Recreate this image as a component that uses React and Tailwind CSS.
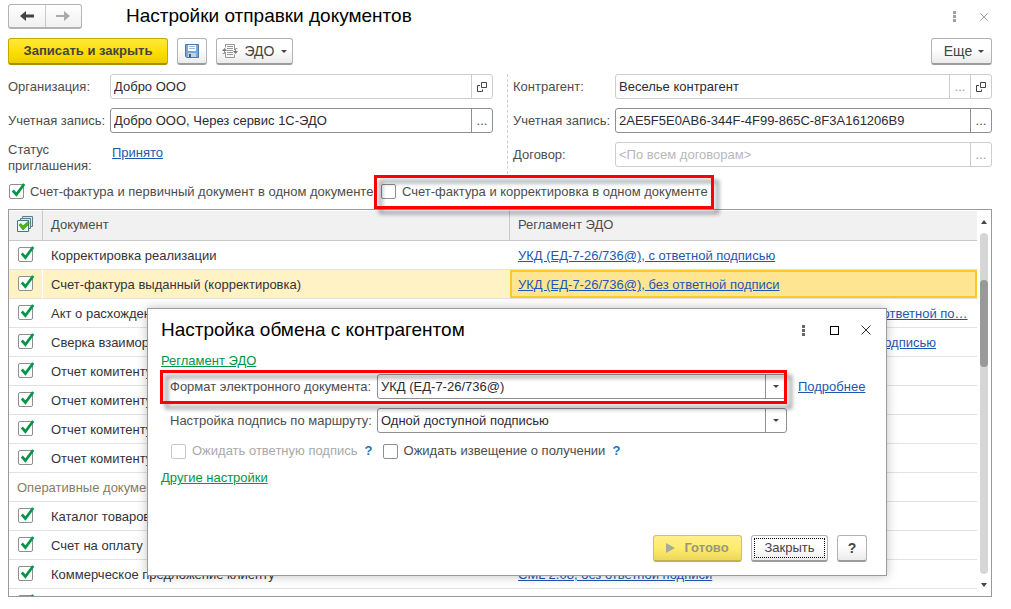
import { useState } from 'react';

const documents = [
  { id: 1, name: 'Корректировка реализации', rule: 'УКД (ЕД-7-26/736@), с ответной подписью' },
  { id: 2, name: 'Счет-фактура выданный (корректировка)', rule: 'УКД (ЕД-7-26/736@), без ответной подписи' },
  { id: 3, name: 'Акт о расхождениях', rule: 'Акт о расхождениях (ЕД-7-26/423@), по приемке товаров, с ответной по…' },
  { id: 4, name: 'Сверка взаиморасчетов', rule: 'Акт сверки взаимных расчетов (ЕД-7-26/405@), с ответной подписью' },
  { id: 5, name: 'Отчет комитенту', rule: '' },
  { id: 6, name: 'Отчет комитенту', rule: '' },
  { id: 7, name: 'Отчет комитенту', rule: '' },
  { id: 8, name: 'Отчет комитенту', rule: '' },
  { id: 9, name: 'Оперативные документы', group: true },
  { id: 10, name: 'Каталог товаров', rule: '' },
  { id: 11, name: 'Счет на оплату покупателю', rule: '' },
  { id: 12, name: 'Коммерческое предложение клиенту', rule: 'CML 2.08, без ответной подписи' },
  { id: 13, name: '', rule: '' },
];

const Checkbox = ({ id, label, disabled, defaultChecked }) => (
  <span className="relative block size-[15px] shrink-0">
    <input
      id={id}
      type="checkbox"
      aria-label={label}
      disabled={disabled}
      defaultChecked={defaultChecked}
      className="peer block size-[15px] appearance-none rounded-[2px] border border-[#8f8f8f] bg-white disabled:border-[#c8c8c8]"
    />
    <svg
      viewBox="0 0 17 17"
      className="pointer-events-none absolute -top-px left-0 hidden size-[17px] peer-checked:block"
    >
      <path d="m3.800 7.500 3.600 4L15.200 1" fill="none" stroke="#009646" strokeWidth="2.700" />
    </svg>
  </span>
);

const OpenIcon = () => (
  <svg viewBox="0 0 10 10" className="size-[10px]" fill="none" stroke="#444">
    <path d="M4.500.5h5v5h-5zM3 3.500H.5v6h5V7.500" />
  </svg>
);

const Arrow = () => (
  <svg viewBox="0 0 6 3" className="h-[3px] w-[6px]">
    <path d="M0 0h6L3 3Z" fill="#444" />
  </svg>
);

const Dots = ({ color }) => (
  <svg viewBox="0 0 3 11" className="h-[11px] w-[3px]" fill={color}>
    <path d="M0 0h3v3H0zM0 4h3v3H0zM0 8h3v3H0z" />
  </svg>
);

const Cross = ({ className }) => (
  <svg viewBox="0 0 10 10" className={className} stroke="currentColor" fill="none">
    <path d="m.5.5 9 9m0-9-9 9" />
  </svg>
);

const Button = ({ className, children, ...props }) => (
  <button
    type="button"
    className={`flex h-[27px] shrink-0 items-center justify-center rounded-[3px] border border-b-2 ${className}`}
    {...props}
  >
    {children}
  </button>
);

const grey = 'border-[#b3b3b3] border-b-[#9c9c9c] bg-linear-to-b from-white from-40% to-[#ebebeb] text-[#444]';

const Field = ({ id, label, value, placeholder, dim, buttons }) => {
  const line = dim ? 'border-[#cdcdcd]' : 'border-[#8f8f8f]';
  return (
    <div className="flex h-[25px] items-center">
      <label htmlFor={id} className="w-[102px] shrink-0 whitespace-nowrap">{label}</label>
      <div className={`flex h-full min-w-0 flex-1 rounded-[3px] border bg-white ${line}`}>
        <input
          id={id}
          type="text"
          defaultValue={value}
          placeholder={placeholder}
          className="min-w-0 flex-1 px-[3px] text-[#2b2b33] outline-none placeholder:text-[#b8b8b8]"
        />
        {buttons.map((kind) => (
          <button
            key={kind}
            type="button"
            aria-label={kind === 'open' ? 'Открыть' : 'Выбрать'}
            className={`flex w-[21px] items-center justify-center border-l ${line}`}
          >
            {kind === 'open' ? <OpenIcon /> : <span className={dim ? 'text-[#999]' : ''}>...</span>}
          </button>
        ))}
      </div>
    </div>
  );
};

const Select = ({ id, label, options }) => (
  <div className="flex h-[25px] items-center">
    <label htmlFor={id} className="w-[207px] shrink-0 whitespace-nowrap">{label}</label>
    <div className="flex h-full min-w-0 flex-1 rounded-[3px] border border-[#8f8f8f] bg-white">
      <select id={id} className="min-w-0 flex-1 appearance-none px-[3px] text-[#2b2b33] outline-none">
        {options.map((option) => (
          <option key={option}>{option}</option>
        ))}
      </select>
      <span className="flex w-[21px] items-center justify-center border-l border-[#8f8f8f]">
        <Arrow />
      </span>
    </div>
  </div>
);

const Highlight = ({ className }) => (
  <div
    className={`pointer-events-none absolute z-10 border-3 border-[#f00] drop-shadow-[5px_5px_2px_rgba(0,0,0,0.4)] ${className}`}
  />
);

const ExchangeDialog = () => (
  <section
    role="dialog"
    aria-label="Настройка обмена с контрагентом"
    className="absolute top-[308px] right-[124px] left-[147px] z-20 flex min-h-[268px] flex-col border border-[#9a9a9a] bg-white pr-[19px] pb-[13px] pl-[13px] shadow-[0_0_10px_rgba(0,0,0,0.25)]"
  >
    <div className="flex h-[42px] items-center">
      <h2 className="flex-1 text-[19px] text-black">Настройка обмена с контрагентом</h2>
      <div className="-mr-[14px] flex items-center">
        <button type="button" aria-label="Меню" className="flex w-[31px] justify-center"><Dots color="#666" /></button>
        <button type="button" aria-label="Развернуть" className="flex w-[31px] justify-center">
          <span className="size-[9px] border border-black" />
        </button>
        <button type="button" aria-label="Закрыть окно" className="flex w-[31px] justify-center text-[#333]">
          <Cross className="size-[10px]" />
        </button>
      </div>
    </div>
    <a href="#rule" className="mt-[2px] self-start leading-[16px] text-[#009646] underline">Регламент ЭДО</a>
    <div className="mt-[5px] flex gap-[11px] pl-[9px]">
      <div className="relative flex min-w-0 flex-1 flex-col gap-[9px]">
        <Select id="format" label="Формат электронного документа:" options={['УКД (ЕД-7-26/736@)']} />
        <Select id="route" label="Настройка подпись по маршруту:" options={['Одной доступной подписью']} />
        <Highlight className="-top-[4px] right-0 -left-[10px] h-[34px]" />
      </div>
      <a href="#more" className="w-[69px] shrink-0 leading-[25px] text-[#1f56b4] underline">Подробнее</a>
    </div>
    <div className="mt-[10px] flex items-center pl-[10px] leading-[16px]">
      <Checkbox id="wait-sign" disabled />
      <label htmlFor="wait-sign" className="ml-[6px] text-[#a9a9a9]">Ожидать ответную подпись</label>
      <button type="button" className="ml-[6px] w-[10px] font-bold text-[#1a75bb]">?</button>
      <span className="w-[9px]" />
      <Checkbox id="wait-notice" />
      <label htmlFor="wait-notice" className="ml-[6px]">Ожидать извещение о получении</label>
      <button type="button" className="ml-[6px] w-[10px] font-bold text-[#1a75bb]">?</button>
    </div>
    <a href="#other" className="mt-[11px] self-start leading-[16px] text-[#009646] underline">Другие настройки</a>
    <div className="mt-auto flex justify-end gap-[9px]">
      <Button
        disabled
        className="w-[89px] gap-[9px] border-[#d6c34a] border-b-[#c4b34a] bg-linear-to-b from-[#fff08a] via-[#ffec6b] to-[#ecd75e] font-bold text-[#969682]"
      >
        <svg viewBox="0 0 9 10" className="h-[10px] w-[9px]">
          <path d="M0 0v10l9-5Z" fill="#a3ad98" />
        </svg>
        Готово
      </Button>
      <Button className={`w-[77px] p-[2px] ${grey}`}>
        <span className="flex h-full w-full items-center justify-center border border-dotted border-black">Закрыть</span>
      </Button>
      <Button aria-label="Справка" className={`w-[30px] text-[14px] font-bold ${grey}`}>?</Button>
    </div>
  </section>
);

const DocumentsTable = () => {
  const [selected, setSelected] = useState(2);

  return (
    <div className="flex h-[388px] overflow-hidden border border-[#9a9a9a]">
      <div className="min-w-0 flex-1 overflow-hidden">
        <table className="w-full table-fixed border-separate border-spacing-0 text-left">
          <colgroup>
            <col className="w-[34px]" />
            <col className="w-1/2" />
            <col className="w-1/2" />
          </colgroup>
          <thead>
            <tr className="h-[31px] bg-[#f1f1f1]">
              <th className="border-t border-r border-b border-t-white border-r-[#c9c9c9] border-b-[#c9c9c9] pb-[3px] pl-[8px]">
                <svg viewBox="0 0 16 16" className="size-[16px]">
                  <path d="M5.500.5h10v10h-10z" fill="#dbe6e8" stroke="#5c7c88" />
                  <path d="M3.500 2.500h10v10h-10z" fill="#dbe6e8" stroke="#5c7c88" />
                  <path d="M.5 4.500h11v11H.5z" fill="#f2f7f8" stroke="#4f7280" />
                  <path d="m2 9 2-1.500 2 2.500 5.500-5L12 8l-6 6Z" fill="#54b415" stroke="#2f8a0c" strokeWidth=".6" />
                </svg>
              </th>
              <th className="border-t border-r border-b border-t-white border-r-[#c9c9c9] border-b-[#c9c9c9] pb-[2px] pl-[8px] font-normal">
                Документ
              </th>
              <th className="border-t border-b border-t-white border-b-[#c9c9c9] pb-[2px] pl-[8px] font-normal">
                Регламент ЭДО
              </th>
            </tr>
          </thead>
          <tbody>
            {documents.map((doc) => {
              if (doc.group) {
                return (
                  <tr key={doc.id} className="h-[29px]">
                    <td colSpan={3} className="border-b border-[#e2e2e2] pt-[2px] pl-[8px] text-[#857d5f]">{doc.name}</td>
                  </tr>
                );
              }
              const active = doc.id === selected;
              return (
                <tr
                  key={doc.id}
                  onClick={() => setSelected(doc.id)}
                  className={`h-[29px] ${active ? 'bg-[#fff2c4]' : ''}`}
                >
                  <td className="border-r border-b border-r-white border-b-[#e2e2e2] pb-[2px] pl-[9px]">
                    <Checkbox label={doc.name} defaultChecked />
                  </td>
                  <td className="truncate border-b border-[#e2e2e2] pt-[2px] pl-[8px] text-[#33333b]">{doc.name}</td>
                  <td className="border-b border-[#e2e2e2] p-0">
                    <div
                      className={`h-[28px] truncate border-2 pt-[5px] pr-[4px] pl-[6px] leading-[16px] ${
                        active ? 'border-[#fbc926] bg-[#fee591]' : 'border-transparent'
                      }`}
                    >
                      <a href="#rule" className="text-[#1f56b4] underline">{doc.rule}</a>
                    </div>
                  </td>
                </tr>
              );
            })}
          </tbody>
        </table>
      </div>
      <div className="flex w-[14px] shrink-0 flex-col items-center pt-[10px] pb-[9px]">
        <svg viewBox="0 0 6 4" className="h-[4px] w-[6px]"><path d="M0 4h6L3 0Z" fill="#444" /></svg>
        <div className="my-[9px] w-[8px] flex-1 rounded-full bg-[#d6d6d6] pt-[47px]">
          <div className="h-[87px] rounded-full bg-[#999]" />
        </div>
        <svg viewBox="0 0 6 4" className="h-[4px] w-[6px]"><path d="M0 0h6L3 4Z" fill="#444" /></svg>
      </div>
    </div>
  );
};

const App = () => (
  <main className="relative bg-white pt-[4px] pr-[19px] pb-[12px] pl-[8px] font-['Liberation_Sans',Arial,sans-serif] text-[13px] text-[#4d4d4d]">
    <header className="flex h-[25px] items-center">
      <div className="flex h-[25px] w-[74px] rounded-[3px] border border-b-2 border-[#b3b3b3] bg-linear-to-b from-white to-[#f0f0f0]">
        <button type="button" aria-label="Назад" className="flex flex-1 items-center justify-center border-r border-[#c9c9c9]">
          <svg viewBox="0 0 14 10" className="h-[10px] w-[14px]"><path d="M0 5 6 0v3.500h8v3H6V10Z" fill="#444" /></svg>
        </button>
        <button type="button" aria-label="Вперед" className="flex flex-1 items-center justify-center">
          <svg viewBox="0 0 14 10" className="h-[10px] w-[14px]"><path d="M14 5 8 0v4H0v2h8v4Z" fill="#aaa" /></svg>
        </button>
      </div>
      <h1 className="ml-[44px] flex-1 text-[19px] text-black">Настройки отправки документов</h1>
      <button type="button" aria-label="Меню" className="mr-[24px]"><Dots color="#a0a0a0" /></button>
      <button type="button" aria-label="Закрыть форму" className="mr-[4px] text-[#888]"><Cross className="size-[8px]" /></button>
    </header>

    <div className="mt-[9px] flex gap-[9px]">
      <Button className="w-[160px] border-[#c7a800] border-b-[#a88e00] bg-linear-to-b from-[#ffe838] via-[#ffe000] to-[#ecce00] font-bold text-[#444]">
        Записать и закрыть
      </Button>
      <Button aria-label="Записать" className={`w-[30px] ${grey}`}>
        <svg viewBox="0 0 14 14" className="size-[14px]">
          <path d="M.5.5h13v13h-12l-1-1Z" fill="#7ba7d6" stroke="#4a78a8" />
          <path d="M3 1h8v6H3z" fill="#fff" />
          <path d="M4 2.500h6M4 4.500h6" stroke="#9db8d2" />
          <path d="M3 9h8v4H3z" fill="#c3d2df" />
          <path d="M4 10h2v3H4z" fill="#34608f" />
        </svg>
      </Button>
      <Button className={`w-[77px] gap-[7px] text-[14px] ${grey}`}>
        <svg viewBox="0 0 16 14" className="h-[14px] w-[16px]">
          <path
            d="M3.500 3.500v-3h9V6M3.500 8v5.500h9v-3M5 2.500h6M5 4.500h6M5 6.500h6M5 8.500h6M5 10.500h6M.5 9.500h2v-4M15.500 4.500h-2v4"
            fill="none"
            stroke="#999"
          />
          <path d="M0 7 2.500 4 5 7ZM11 7h5l-2.500 3Z" fill="#777" />
        </svg>
        ЭДО
        <Arrow />
      </Button>
      <Button className={`ml-auto w-[61px] gap-[6px] pl-[5px] text-[14px] ${grey}`}>
        Еще
        <Arrow />
      </Button>
    </div>

    <div className="mt-[9px] grid grid-cols-[500fr_484fr]">
      <div className="flex flex-col gap-[9px] border-r border-dashed border-[#cfcfcf] pr-[14px]">
        <Field id="org" label="Организация:" value="Добро ООО" dim buttons={['open']} />
        <Field id="org-account" label="Учетная запись:" value="Добро ООО, Через сервис 1С-ЭДО" buttons={['pick']} />
        <div className="flex h-[32px] leading-[16px]">
          <span className="w-[104px] shrink-0">Статус приглашения:</span>
          <a href="#status" className="mt-[3px] self-start text-[#1f56b4] underline">Принято</a>
        </div>
      </div>
      <div className="flex flex-col gap-[9px] pl-[5px]">
        <Field id="partner" label="Контрагент:" value="Веселье контрагент" dim buttons={['pick', 'open']} />
        <Field id="partner-account" label="Учетная запись:" value="2AE5F5E0AB6-344F-4F99-865C-8F3A161206B9" buttons={['pick']} />
        <Field id="contract" label="Договор:" placeholder="<По всем договорам>" dim buttons={['pick']} />
      </div>
    </div>

    <div className="flex h-[35px] items-center pl-px">
      <div className="flex w-[372px] shrink-0 items-center gap-[6px] whitespace-nowrap">
        <Checkbox id="invoice-primary" defaultChecked />
        <label htmlFor="invoice-primary">Счет-фактура и первичный документ в одном документе</label>
      </div>
      <div className="relative flex w-[325px] items-center gap-[6px] whitespace-nowrap">
        <Checkbox id="invoice-correction" />
        <label htmlFor="invoice-correction">Счет-фактура и корректировка в одном документе</label>
        <Highlight className="-top-[7px] -right-[8px] -left-[7px] h-[34px]" />
      </div>
    </div>

    <DocumentsTable />
    <ExchangeDialog />
  </main>
);

export default App;
